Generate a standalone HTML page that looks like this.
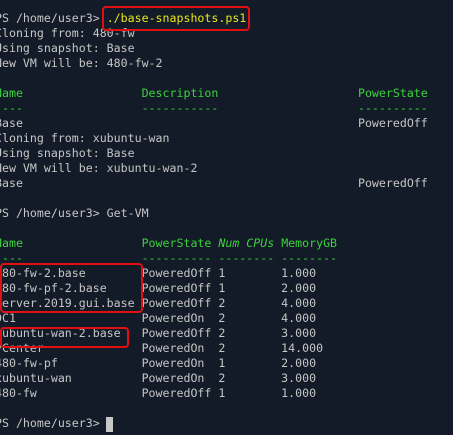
<!DOCTYPE html>
<html><head><meta charset="utf-8"><style>
html,body{margin:0;padding:0;width:453px;height:435px;overflow:hidden;background:#131a28;}
pre{position:absolute;left:-5px;top:11px;margin:0;font-family:"DejaVu Sans Mono","Liberation Mono",monospace;font-size:11.6px;line-height:15px;color:#c6c6c6;white-space:pre;}
.g{color:#3bd23b}.y{color:#e8e81a}.i{font-style:italic}
.box{position:absolute;border:2px solid #e01010;border-radius:4px;}
.cur{position:absolute;left:106px;top:417px;width:7px;height:15px;background:#c8c8c8;}
</style></head><body>
<pre>PS /home/user3&gt; <span class="y">./base-snapshots.ps1</span>
Cloning from: 480-fw
Using snapshot: Base
New VM will be: 480-fw-2

<span class="g">Name                 Description                    PowerState</span>
<span class="g">----                 -----------                    ----------</span>
Base                                                PoweredOff
Cloning from: xubuntu-wan
Using snapshot: Base
New VM will be: xubuntu-wan-2
Base                                                PoweredOff

PS /home/user3&gt; Get-VM

<span class="g">Name                 PowerState <span class="i">Num CPUs</span> MemoryGB</span>
<span class="g">----                 ---------- -------- --------</span>
480-fw-2.base        PoweredOff 1        1.000
480-fw-pf-2.base     PoweredOff 1        2.000
Server.2019.gui.base PoweredOff 2        4.000
DC1                  PoweredOn  2        4.000
xubuntu-wan-2.base   PoweredOff 2        3.000
vCenter              PoweredOn  2        14.000
480-fw-pf            PoweredOn  1        2.000
xubuntu-wan          PoweredOn  2        3.000
480-fw               PoweredOff 1        1.000

PS /home/user3&gt; </pre>
<div class="cur"></div>
<div class="box" style="left:102px;top:6px;width:144px;height:21px"></div>
<div class="box" style="left:0;top:263px;width:139px;height:46px"></div>
<div class="box" style="left:0;top:327px;width:125px;height:17px"></div>
</body></html>
